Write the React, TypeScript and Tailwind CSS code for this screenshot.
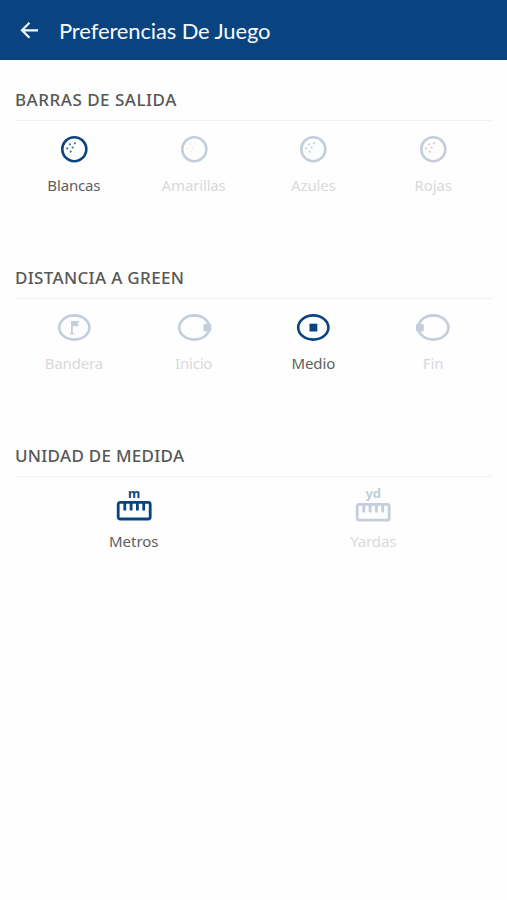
import type { ReactNode } from 'react';

const NAVY = '#0a4480';
const MUTED = '#c3cddb';

function Ball({ color, dots, fill = 'none' }: { color: string; dots: string; fill?: string }) {
  return (
    <svg width="40" height="40" viewBox="0 0 40 40">
      <circle cx="20.3" cy="20.2" r="12" fill={fill} stroke={color} strokeWidth="2.6" />
      <g fill={dots}>
        <circle cx="15.9" cy="15.3" r="1.1" />
        <circle cx="20.9" cy="14.3" r="1.1" />
        <circle cx="13.2" cy="19.4" r="1.1" />
        <circle cx="18.7" cy="18.5" r="1.1" />
        <circle cx="16.7" cy="22.6" r="1.1" />
      </g>
    </svg>
  );
}

function Green({ color, children }: { color: string; children: ReactNode }) {
  return (
    <svg width="40" height="40" viewBox="0 0 40 40">
      <g transform="translate(0.3 0.9)">
        <ellipse cx="20" cy="19.6" rx="15.1" ry="12.1" fill="none" stroke={color} strokeWidth="2.6" />
        {children}
      </g>
    </svg>
  );
}

function Ruler({ color, unit, unitClass, top, height }: { color: string; unit: string; unitClass: string; top: number; height: number }) {
  return (
    <svg width="40" height="40" viewBox="0 0 40 40">
      <text x="20.2" y="13" textAnchor="middle" fill={color} className={`font-['Noto_Sans',sans-serif] font-bold ${unitClass}`}>
        {unit}
      </text>
      <g transform={`translate(0.2 ${top})`} fill="none" stroke={color} strokeWidth="2.8">
        <rect x="4" y="1.4" width="32" height={height} rx="2" />
        <path d="M10.6 1.4V9.4M16.9 1.4V9.4M23.2 1.4V9.4M29.5 1.4V9.4" />
      </g>
    </svg>
  );
}

function Option({ label, spacing, active, children }: { label: string; spacing: string; active?: boolean; children: ReactNode }) {
  return (
    <button className="flex flex-1 flex-col items-center pt-2">
      <span className="block h-10">{children}</span>
      <span className={`mt-1 block text-[15px] leading-6 ${spacing} ${active ? 'text-[#606060]' : 'text-[#d9d9db]'}`}>{label}</span>
    </button>
  );
}

function Section({ title, spacing, children }: { title: string; spacing: string; children: ReactNode }) {
  return (
    <section className="h-[178px] px-[15px]">
      <h2 className={`h-[60px] pt-[28px] text-[17px] leading-6 font-medium whitespace-nowrap text-[#575757] ${spacing}`}>{title}</h2>
      <div className="border-t border-[#f2f2f3]">
        <div className="-mx-px flex">{children}</div>
      </div>
    </section>
  );
}

export default function App() {
  return (
    <main className="h-[900px] w-[507px] overflow-hidden bg-[#fefefe] font-['Noto_Sans','Open_Sans',sans-serif]">
      <header className="flex h-[60px] items-center bg-[#0a4480] pl-5 text-[#f4faff]">
        <svg width="19" height="18" viewBox="0 0 19 18" fill="none" stroke="currentColor" strokeWidth="2.2">
          <path d="M18 9.3H2.5M9.5 1.8L2 9.3l7.5 7.5" />
        </svg>
        <h1 className="ml-5 pt-0.5 font-['Lato',sans-serif] text-[22px] leading-7 tracking-[-0.13px]">Preferencias De Juego</h1>
      </header>

      <Section title="BARRAS DE SALIDA" spacing="tracking-[0.5px]">
        <Option label="Blancas" spacing="tracking-[-0.15px]" active><Ball color={NAVY} dots="#44729f" /></Option>
        <Option label="Amarillas" spacing="tracking-[-0.15px]"><Ball color={MUTED} dots="#f3f3df" /></Option>
        <Option label="Azules" spacing="tracking-[-0.1px]"><Ball color={MUTED} dots="#c5d3e2" fill="#fbfdff" /></Option>
        <Option label="Rojas" spacing="tracking-[-0.1px]"><Ball color={MUTED} dots="#d8c9d5" fill="#fffcfc" /></Option>
      </Section>

      <Section title="DISTANCIA A GREEN" spacing="tracking-[0.33px]">
        <Option label="Bandera" spacing="tracking-[-0.2px]">
          <Green color={MUTED}>
            <path d="M16.7 13.2H25L23.2 15.8 25 18.4H18.5V25.3H20V26.5H15.5V25.3H16.7Z" fill={MUTED} />
          </Green>
        </Option>
        <Option label="Inicio" spacing="tracking-[-0.2px]">
          <Green color={MUTED}><rect x="29.2" y="15.8" width="7.8" height="7.8" rx="1.5" fill={MUTED} /></Green>
        </Option>
        <Option label="Medio" spacing="tracking-[-0.1px]" active>
          <Green color={NAVY}><rect x="16.2" y="15.8" width="7.8" height="7.8" fill={NAVY} /></Green>
        </Option>
        <Option label="Fin" spacing="tracking-normal">
          <Green color={MUTED}><rect x="2.7" y="15.8" width="7.8" height="7.8" rx="1.5" fill={MUTED} /></Green>
        </Option>
      </Section>

      <Section title="UNIDAD DE MEDIDA" spacing="tracking-[0.28px]">
        <Option label="Metros" spacing="tracking-normal" active><Ruler color={NAVY} unit="m" unitClass="text-[12.5px]" top={16} height={16.6} /></Option>
        <Option label="Yardas" spacing="tracking-[-0.15px]"><Ruler color={MUTED} unit="yd" unitClass="text-[13px]" top={18} height={15.8} /></Option>
      </Section>
    </main>
  );
}
